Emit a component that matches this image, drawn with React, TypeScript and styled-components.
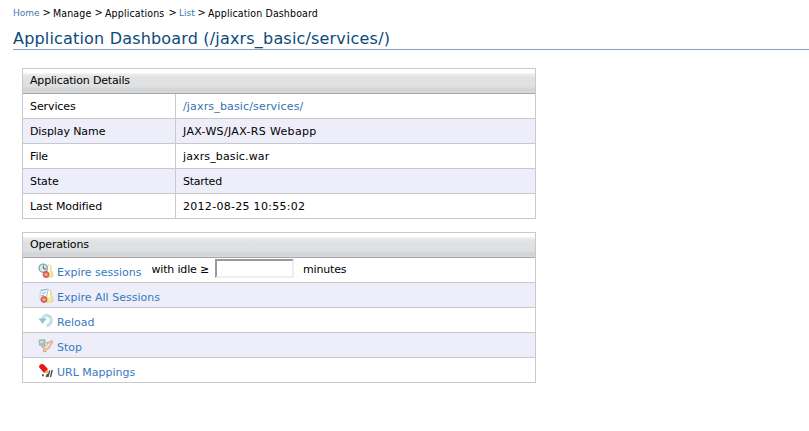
import React from "react";
import styled, { createGlobalStyle } from "styled-components";

const GlobalStyle = createGlobalStyle`
  * { box-sizing: border-box; }
  body {
    margin: 0;
    background: #fff;
    color: #000;
    font: 11px/14px "DejaVu Sans", Verdana, sans-serif;
    overflow: hidden;
  }
`;

const Page = styled.div`
  padding: 6px 0 0 13px;
  white-space: nowrap;
`;

const Breadcrumb = styled.nav`
  display: flex;
  height: 14px;
  font-family: "DejaVu Sans Condensed", "DejaVu Sans", sans-serif;
  font-stretch: condensed;
  font-size: 10.5px;
  letter-spacing: 0.14px;
  white-space: pre;
`;

const Crumb = styled.span<{ $width: number }>`
  width: ${(p) => p.$width}px;
`;

const Separator = styled.span`
  width: 10px;
  margin-left: -0.5px;
  margin-right: 0.5px;
  font-size: 11px;
`;

const CrumbLink = styled.a<{ $width: number }>`
  width: ${(p) => p.$width}px;
  color: #4477ad;
  font-family: "DejaVu Sans", sans-serif;
  font-stretch: normal;
  font-size: 9px;
  letter-spacing: 0;
  line-height: 15px;
`;

const Title = styled.h1`
  margin: 7px 0 18px;
  height: 23px;
  border-bottom: 1px solid #8ba0bf;
  color: #0b4a7b;
  font-size: 16px;
  font-weight: 400;
  letter-spacing: 0.18px;
  line-height: 23px;
`;

const Panel = styled.section`
  width: 514px;
  margin: 0 0 13px 9px;
  border: 1px solid #c9c9cc;
`;

const PanelHeader = styled.h2`
  margin: 0;
  height: 25px;
  padding-left: 7px;
  border-bottom: 1px solid #a5a3a5;
  background: linear-gradient(#fff 0 4px, #ececed 5px, #e0e1e2 9px, #dfe0e1 17px, #cfd0d1 22px, #dedede 23px, #d6d6d6 24px);
  font-size: 11px;
  font-weight: 400;
  letter-spacing: -0.17px;
  line-height: 23px;
`;

const Row = styled.div`
  display: flex;
  height: 25px;
  border-bottom: 1px solid #c9c9cc;
  line-height: 25px;
  &:nth-child(odd) { background: #eeeefb; }
  &:last-child { height: 24px; border-bottom: 0; }
`;

const Label = styled.div`
  width: 153px;
  padding-left: 7px;
  border-right: 1px solid #c9c9cc;
  letter-spacing: -0.1px;
`;

const Value = styled.div<{ $tracking: number }>`
  padding-left: 7px;
  letter-spacing: ${(p) => p.$tracking}px;
`;

const Link = styled.a`
  color: #3572ad;
`;

const Operation = styled(Row)`
  padding-left: 15px;
`;

const Icon = styled.svg`
  width: 16px;
  height: 16px;
  margin: 5px 3px 0 0;
  flex: none;
`;

const OperationLink = styled(Link)`
  padding-top: 2px;
  color: #367abd;
`;

const IdleField = styled.label`
  display: flex;
  margin-left: 10px;
  letter-spacing: -0.17px;
  line-height: 23px;
`;

const IdleInput = styled.input`
  width: 79px;
  height: 19px;
  margin: 1px 9px 0 6px;
  padding: 1px;
  border: 2px solid;
  border-color: #999 #eee #eee #999;
  border-radius: 0;
  background: #fff;
  font: inherit;
`;

const StopBadge = () => (
  <g>
    <circle cx="8" cy="11.5" r="3" fill="#e8695c" stroke="#cc4a40" strokeWidth=".8" />
    <path d="m7 10.5 2 2m0-2-2 2" stroke="#fff0ea" strokeWidth=".9" />
  </g>
);

const User = () => (
  <g>
    <path d="M9.6 2.6c1.6-1.5 3.7-.5 3.7 1.8 0 1.2-.3 2-.8 2.7 1.8.8 2.5 3 2.5 6.2-1.4 1-4 1-7 .7V8l1.8-1.3C9 5.5 9 3.8 9.6 2.6Z" fill="#f5ea96" stroke="#d3c697" strokeWidth=".7" />
    <path d="M10.9 3.5v5.2" stroke="#fffdf4" strokeWidth="2.2" strokeLinecap="round" />
  </g>
);

const ExpireIcon = () => (
  <Icon viewBox="0 0 16 16">
    <User />
    <circle cx="5.2" cy="5.2" r="4.1" fill="#dcebf0" stroke="#8ba5ae" strokeWidth="1.4" />
    <path d="M5.4 2.5v3L8 6.2" fill="none" stroke="#46636d" />
    <StopBadge />
  </Icon>
);

const ExpireAllIcon = () => (
  <Icon viewBox="0 0 16 16">
    <User />
    <path d="m3 2 7-1-1 6-5 6-2-1V7Z" fill="#f4fafc" stroke="#a8c6d0" strokeWidth=".8" />
    <path d="m3 2.5 6-1M4 5.5l4-1M3 8l3-1" stroke="#86b9cc" />
    <g transform="translate(-2 0)"><StopBadge /></g>
  </Icon>
);

const ReloadIcon = () => (
  <Icon viewBox="0 0 16 16">
    <path d="M4.5 7C4.9 3.7 7 2.3 9.2 2.7c3.2.4 4.6 3 3.9 5.6-.5 2.4-2 3.8-4.3 4.6" fill="none" stroke="#a8d0d5" strokeWidth="2.7" />
    <path d="M5 6C5.5 3.9 7.3 2.7 9.2 3c3.2.4 4.3 2.8 3.6 5.3-.5 2.1-1.9 3.5-4 4.3" fill="none" stroke="#d7edef" strokeWidth="1.2" />
    <path d="M1 5.8h7.2l-3.6 4.8Z" fill="#8bc8d2" stroke="#8bc0c8" strokeWidth=".5" />
  </Icon>
);

const StopIcon = () => (
  <Icon viewBox="0 0 16 16">
    <path d="M1.3 1.8H7v5.5H1.3Z" fill="#9ecabb" stroke="#8daeb1" strokeWidth=".8" />
    <path d="M2 3h3v2H2Z" fill="#cde7c4" />
    <path d="m8.5 4 1.6.8L13 2.5l2 1.3-2.8 4.2-1 2.3-2.5 1.2L7.3 14l-2.1-.7 1-3L3.5 9l2.2-1.3 2.3.5 1.7-1.8Z" fill="#f0c5ab" stroke="#c99276" strokeWidth=".7" />
    <path d="m7.5 10 4-4" stroke="#fff0df" strokeWidth="1.1" />
  </Icon>
);

const MappingIcon = () => (
  <Icon viewBox="0 0 16 16">
    <path d="M1.1 4.3C.6 1.2 4.4-.2 6.2 2l3.9 4.2-4 3.7Z" fill="#ee1610" />
    <path d="m6.1 9.9 3.8-3.8.5 4.5Z" fill="#f3b56b" />
    <path d="M4 11.3h1.8v2H4Z" fill="#514a46" />
    <path d="m8.3 14 1.1-3m.4 3 2-6.5m.7 6.5 1.8-7" stroke="#49443f" strokeWidth="1.3" />
  </Icon>
);

const details = [
  { label: "Display Name", value: "JAX-WS/JAX-RS Webapp", tracking: 0.33 },
  { label: "File", value: "jaxrs_basic.war", tracking: 0.13 },
  { label: "State", value: "Started", tracking: -0.25 },
  { label: "Last Modified", value: "2012-08-25 10:55:02", tracking: 0.29 },
];

export default function App() {
  return (
    <>
      <GlobalStyle />
      <Page>
        <Breadcrumb>
          <CrumbLink $width={30}>Home</CrumbLink>
          <Separator>&gt;</Separator>
          <Crumb $width={42}>Manage</Crumb>
          <Separator>&gt;</Separator>
          <Crumb $width={64}>Applications</Crumb>
          <Separator>&gt;</Separator>
          <CrumbLink $width={19}>List</CrumbLink>
          <Separator>&gt;</Separator>
          <Crumb $width={120}>Application Dashboard</Crumb>
        </Breadcrumb>
        <Title>Application Dashboard (/jaxrs_basic/services/)</Title>
        <Panel>
          <PanelHeader>Application Details</PanelHeader>
          <Row>
            <Label>Services</Label>
            <Value $tracking={0.16}><Link>/jaxrs_basic/services/</Link></Value>
          </Row>
          {details.map(({ label, value, tracking }) => (
            <Row key={label}>
              <Label>{label}</Label>
              <Value $tracking={tracking}>{value}</Value>
            </Row>
          ))}
        </Panel>
        <Panel>
          <PanelHeader>Operations</PanelHeader>
          <Operation>
            <ExpireIcon />
            <OperationLink>Expire sessions</OperationLink>
            <IdleField>with idle ≥<IdleInput />minutes</IdleField>
          </Operation>
          <Operation><ExpireAllIcon /><OperationLink>Expire All Sessions</OperationLink></Operation>
          <Operation><ReloadIcon /><OperationLink>Reload</OperationLink></Operation>
          <Operation><StopIcon /><OperationLink>Stop</OperationLink></Operation>
          <Operation><MappingIcon /><OperationLink>URL Mappings</OperationLink></Operation>
        </Panel>
      </Page>
    </>
  );
}
